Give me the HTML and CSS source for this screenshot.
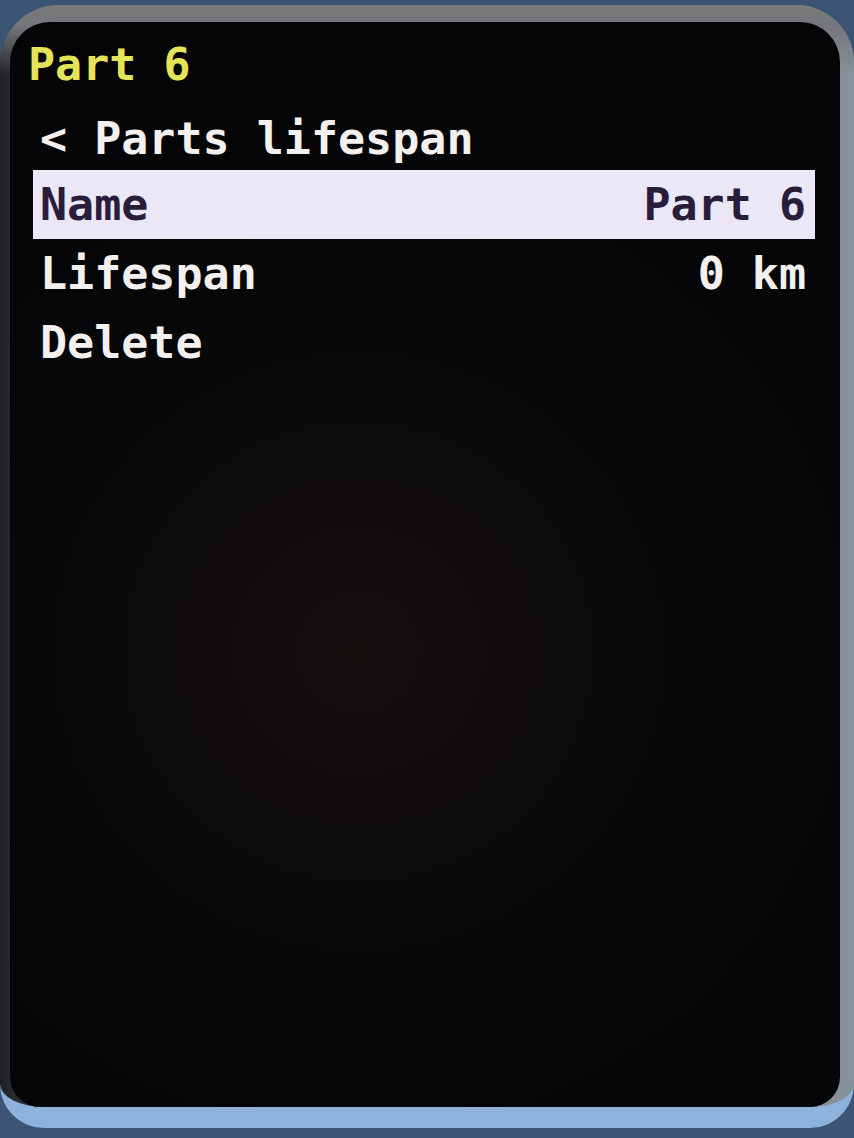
FILE: index.html
```html
<!DOCTYPE html>
<html lang="en">
<head>
    <meta charset="UTF-8">
    <meta name="viewport" content="width=device-width, initial-scale=1.0">
    <title>Part 6</title>
    <link rel="stylesheet" href="styles.css">
</head>
<body>
    <div class="device">
        <div class="screen">
            <div class="title">Part 6</div>
            <div class="back">&lt; Parts lifespan</div>
            <div class="menu">
                <div class="menu-row selected">
                    <span class="label">Name</span>
                    <span class="value">Part 6</span>
                </div>
                <div class="menu-row">
                    <span class="label">Lifespan</span>
                    <span class="value">0 km</span>
                </div>
                <div class="menu-row">
                    <span class="label">Delete</span>
                </div>
            </div>
        </div>
    </div>
</body>
</html>
```

FILE: styles.css
```css
body {
    margin: 0;
    height: 1138px;
    overflow: hidden;
    background-color: #3b5474;
    font-family: "DejaVu Sans Mono", "Liberation Mono", monospace;
    font-weight: bold;
    font-size: 45px;
}

.device {
    margin-top: 5px;
    padding: 17px 14px 0 10px;
    border-bottom: 21px solid #8db3dc;
    border-radius: 58px 58px 44px 44px;
    background:
        linear-gradient(180deg, #7a7b79 0, #74767a 20px, rgba(116, 118, 122, 0) 70px),
        linear-gradient(90deg, #1f2125 0%, #4e5051 8%, #767877 40%, #7d8286 80%, #86939c 100%);
}

.screen {
    height: 1085px;
    border-radius: 40px 40px 30px 30px;
    background: radial-gradient(ellipse 60% 45% at 42% 58%, #15100e 0%, #0a0809 55%, #050507 100%);
    overflow: hidden;
}

.title {
    height: 85px;
    line-height: 85px;
    padding-left: 18px;
    color: #e4e458;
}

.back {
    height: 63px;
    line-height: 63px;
    padding-left: 30px;
    color: #f4f0f0;
}

.menu {
    display: flex;
    flex-direction: column;
    margin: 0 25px 0 23px;
}

.menu-row {
    display: flex;
    justify-content: space-between;
    height: 69px;
    line-height: 69px;
    padding: 0 9px 0 7px;
    color: #f4f0f0;
}

.menu-row.selected {
    background-color: #ebe7f6;
    color: #2a1d3c;
}
```
